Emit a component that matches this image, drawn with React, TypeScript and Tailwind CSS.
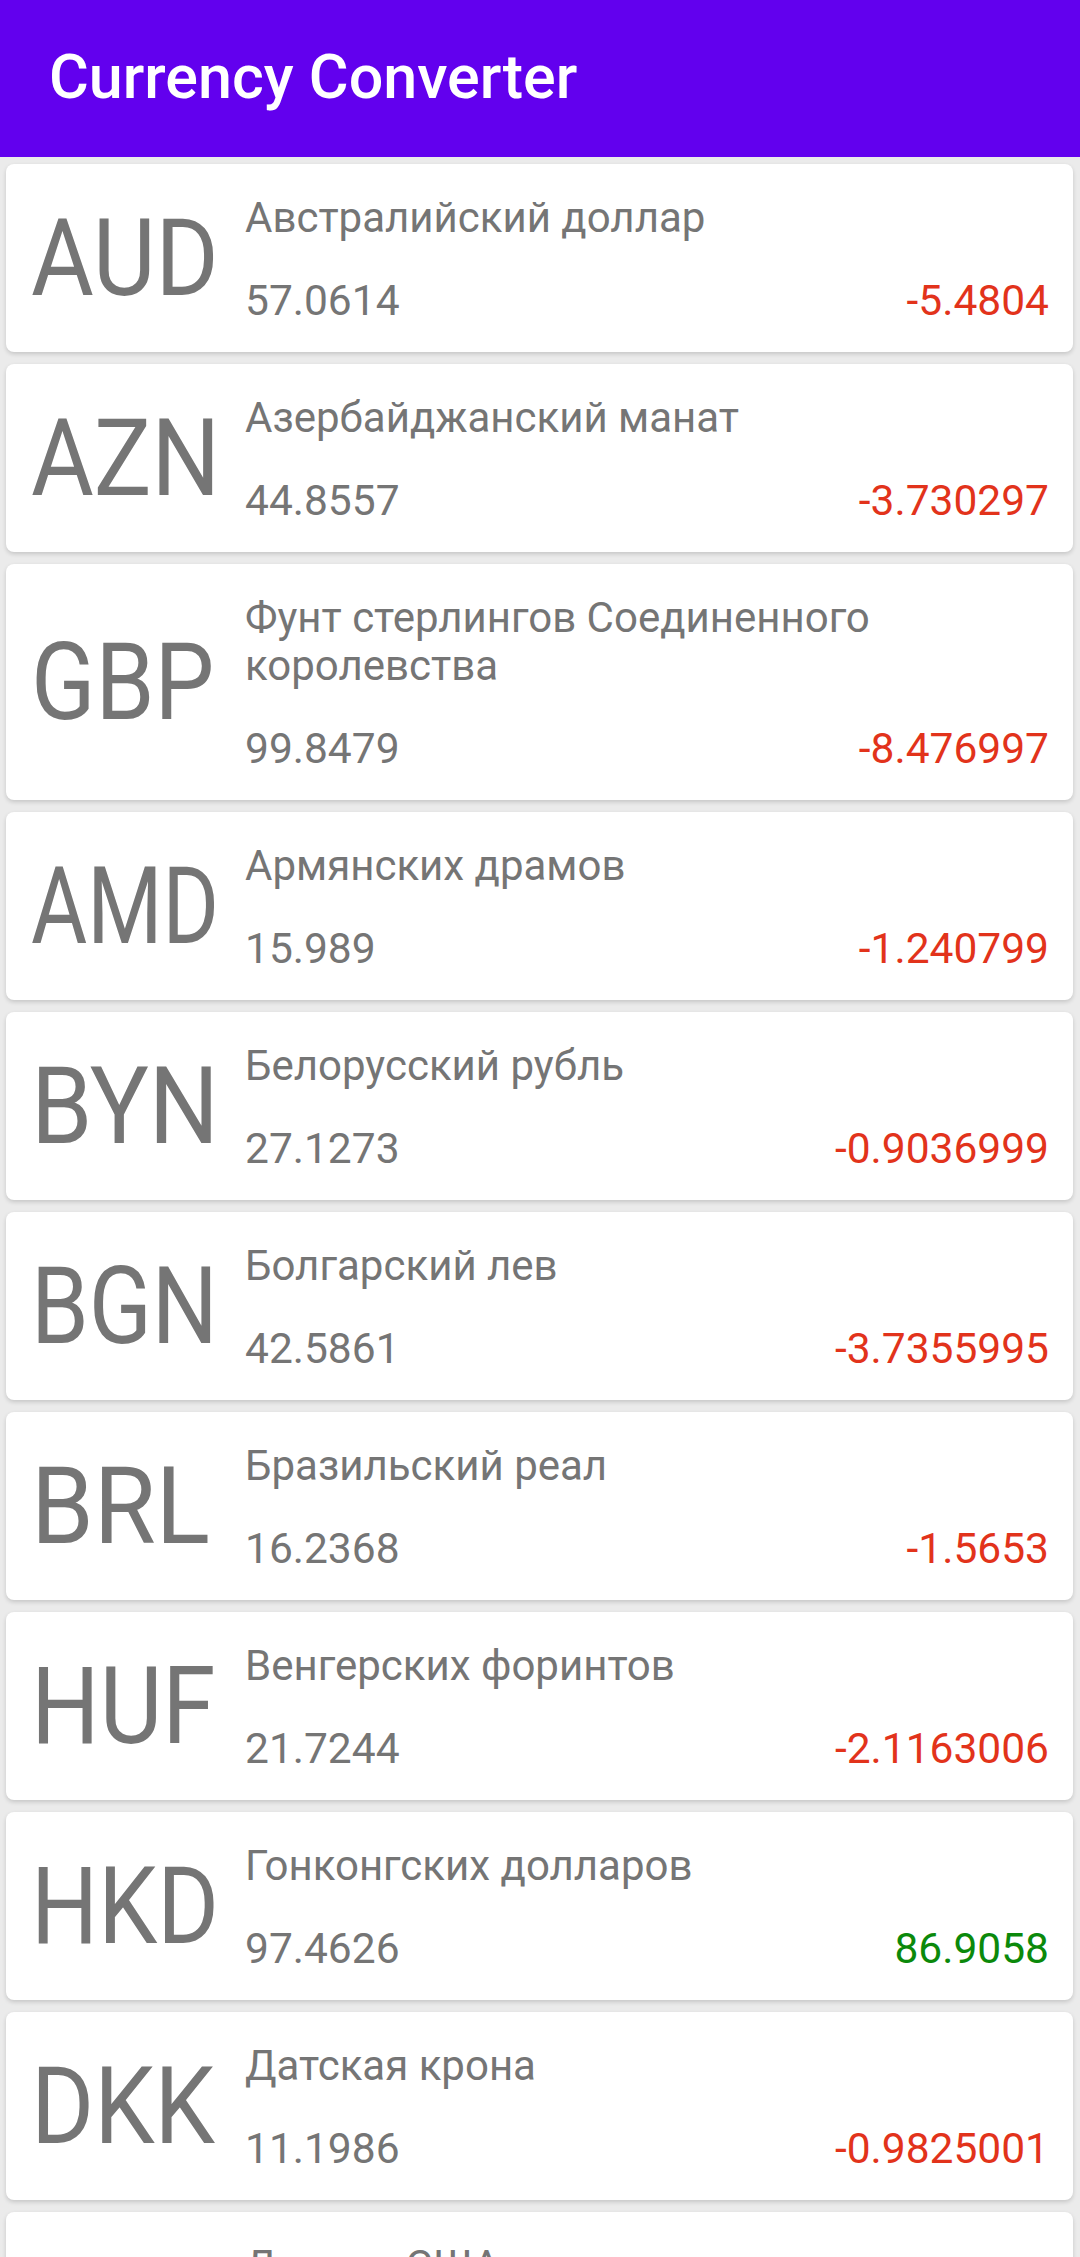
const rates = [
  { code: "AUD", fit: "scale-x-[0.9]", name: "Австралийский доллар", value: "57.0614", diff: "-5.4804" },
  { code: "AZN", fit: "scale-x-[0.9]", name: "Азербайджанский манат", value: "44.8557", diff: "-3.730297" },
  { code: "GBP", fit: "scale-x-[0.885]", name: "Фунт стерлингов Соединенного королевства", value: "99.8479", diff: "-8.476997" },
  { code: "AMD", fit: "scale-x-[0.806]", name: "Армянских драмов", value: "15.989", diff: "-1.240799" },
  { code: "BYN", fit: "scale-x-[0.92]", name: "Белорусский рубль", value: "27.1273", diff: "-0.9036999" },
  { code: "BGN", fit: "scale-x-[0.866]", name: "Болгарский лев", value: "42.5861", diff: "-3.7355995" },
  { code: "BRL", fit: "scale-x-[0.94]", name: "Бразильский реал", value: "16.2368", diff: "-1.5653" },
  { code: "HUF", fit: "scale-x-[0.9]", name: "Венгерских форинтов", value: "21.7244", diff: "-2.1163006" },
  { code: "HKD", fit: "scale-x-[0.88]", name: "Гонконгских долларов", value: "97.4626", diff: "86.9058" },
  { code: "DKK", fit: "scale-x-[0.9]", name: "Датская крона", value: "11.1986", diff: "-0.9825001" },
  { code: "USD", fit: "scale-x-[0.88]", name: "Доллар США", value: "73.8757", diff: "-6.0154" },
];

function RateCard({ code, fit, name, value, diff }: (typeof rates)[number]) {
  const negative = diff.startsWith("-");
  return (
    <div className="flex items-center rounded-[8px] bg-white shadow-[0_2px_4px_rgba(0,0,0,0.16)]">
      <div className="w-[239px] shrink-0 pl-[25px] text-[107px] leading-none text-[#757575]">
        <span className={`inline-block origin-left ${fit}`}>{code}</span>
      </div>
      <div className="flex flex-1 flex-col pt-[30px] pb-[26px] pr-[24px]">
        <div className="text-[42px] leading-[48px] text-[#757575]">{name}</div>
        <div className="mt-[34px] flex justify-between text-[42.5px] leading-[50px]">
          <span className="text-[#757575]">{value}</span>
          <span className={negative ? "text-[#e2331b]" : "text-[#0b890b]"}>
            {diff}
          </span>
        </div>
      </div>
    </div>
  );
}

export default function App() {
  return (
    <div
      className="h-[2257px] w-[1080px] overflow-hidden bg-[#ebebeb]"
      style={{ fontFamily: "Roboto, 'Noto Sans', sans-serif" }}
    >
      <header className="flex h-[157px] items-center bg-[#6200ee] pl-[49px] pb-[2px]">
        <h1 className="text-[61px] font-medium text-white">Currency Converter</h1>
      </header>
      <div className="flex flex-col gap-[12px] pl-[6px] pr-[7px] pt-[7px]">
        {rates.map((r) => (
          <RateCard key={r.code} {...r} />
        ))}
      </div>
    </div>
  );
}
